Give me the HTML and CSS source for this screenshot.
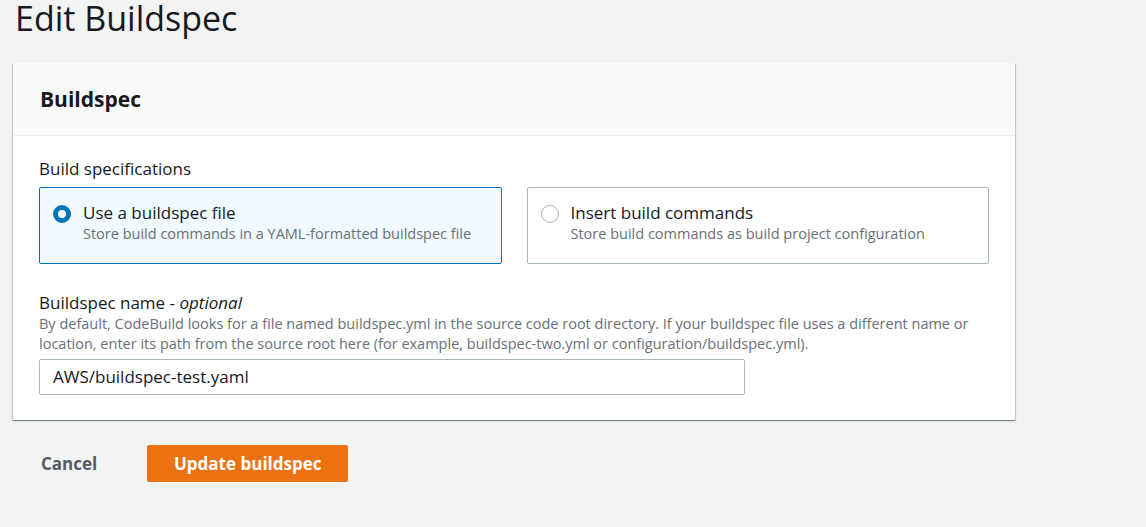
FILE: index.html
```html
<!DOCTYPE html>
<html>
<head>
<meta charset="utf-8">
<link rel="stylesheet" href="styles.css">
</head>
<body>
<h1 class="page-title">Edit Buildspec</h1>
<section class="card">
  <div class="card-header"><h2>Buildspec</h2></div>
  <div class="card-body">
    <div class="field-label">Build specifications</div>
    <div class="tiles">
      <label class="tile selected">
        <span class="radio on"></span>
        <span class="tile-text">
          <span class="tile-title">Use a buildspec file</span>
          <span class="tile-desc">Store build commands in a YAML-formatted buildspec file</span>
        </span>
      </label>
      <label class="tile">
        <span class="radio"></span>
        <span class="tile-text">
          <span class="tile-title">Insert build commands</span>
          <span class="tile-desc">Store build commands as build project configuration</span>
        </span>
      </label>
    </div>
    <div class="field">
      <div class="field-label name-label">Buildspec name - <i>optional</i></div>
      <div class="help">By default, CodeBuild looks for a file named buildspec.yml in the source code root directory. If your buildspec file uses a different name or location, enter its path from the source root here (for example, buildspec-two.yml or configuration/buildspec.yml).</div>
      <div class="input">AWS/buildspec-test.yaml</div>
    </div>
  </div>
</section>
<div class="actions">
  <span class="cancel">Cancel</span>
  <span class="primary">Update buildspec</span>
</div>
</body>
</html>
```
FILE: styles.css
```css
html, body {
  margin: 0;
  padding: 0;
  background: #f2f3f3;
  font-family: "Open Sans", "Noto Sans", sans-serif;
  color: #16191f;
}
.page-title {
  margin: 0 0 0 15px;
  padding-top: 1px;
  font-size: 34px;
  font-weight: 400;
  line-height: 34px;
  height: 62px;
  color: #16191f;
}
.card {
  margin-left: 13px;
  width: 1002px;
  background: #fff;
  box-shadow: 0 1px 1px 0 rgba(0,28,36,.3), 1px 1px 1px 0 rgba(0,28,36,.15), -1px 1px 1px 0 rgba(0,28,36,.15);
}
.card-header {
  background: #fafafa;
  border-bottom: 1px solid #eaeded;
  height: 72px;
  padding-left: 27px;
  display: flex;
  align-items: center;
}
.card-header h2 {
  margin: 0;
  font-size: 21px;
  font-weight: 700;
}
.card-body {
  padding: 22px 26px 25px 26px;
}
.field-label {
  font-size: 17px;
  line-height: 22px;
  color: #16191f;
}
.tiles {
  display: flex;
  gap: 25px;
  margin-top: 7px;
  width: 950px;
}
.tile {
  flex: 1;
  height: 77px;
  box-sizing: border-box;
  border: 1px solid #aab7b8;
  border-radius: 2px;
  display: flex;
  align-items: flex-start;
  padding: 14px 13px;
  gap: 12px;
}
.tile.selected {
  border-color: #0073bb;
  background: #f1faff;
}
.radio {
  width: 18px;
  height: 18px;
  box-sizing: border-box;
  border-radius: 50%;
  border: 1.5px solid #aab7b8;
  background: #fff;
  margin-top: 3px;
  flex: none;
}
.radio.on {
  border: 5px solid #0073bb;
}
.tile-text {
  display: flex;
  flex-direction: column;
}
.tile-title {
  font-size: 17px;
  line-height: 22px;
}
.tile-desc {
  font-size: 14.5px;
  line-height: 20px;
  color: #687078;
}
.field {
  margin-top: 28px;
}
.help {
  font-size: 14.5px;
  line-height: 20px;
  color: #687078;
  width: 950px;
}
.input {
  margin-top: 5px;
  width: 706px;
  height: 36px;
  box-sizing: border-box;
  border: 1px solid #aab7b8;
  border-radius: 2px;
  background: #fff;
  padding: 0 13px;
  font-size: 17px;
  line-height: 34px;
}
.actions {
  display: flex;
  align-items: center;
  margin-top: 25px;
  padding-left: 41px;
  gap: 50px;
}
.cancel {
  font-size: 17px;
  font-weight: 700;
  color: #545b64;
}
.primary {
  background: #ec7211;
  color: #fff;
  font-size: 17px;
  font-weight: 700;
  width: 201px;
  height: 37px;
  line-height: 37px;
  text-align: center;
  border-radius: 2px;
}
```
